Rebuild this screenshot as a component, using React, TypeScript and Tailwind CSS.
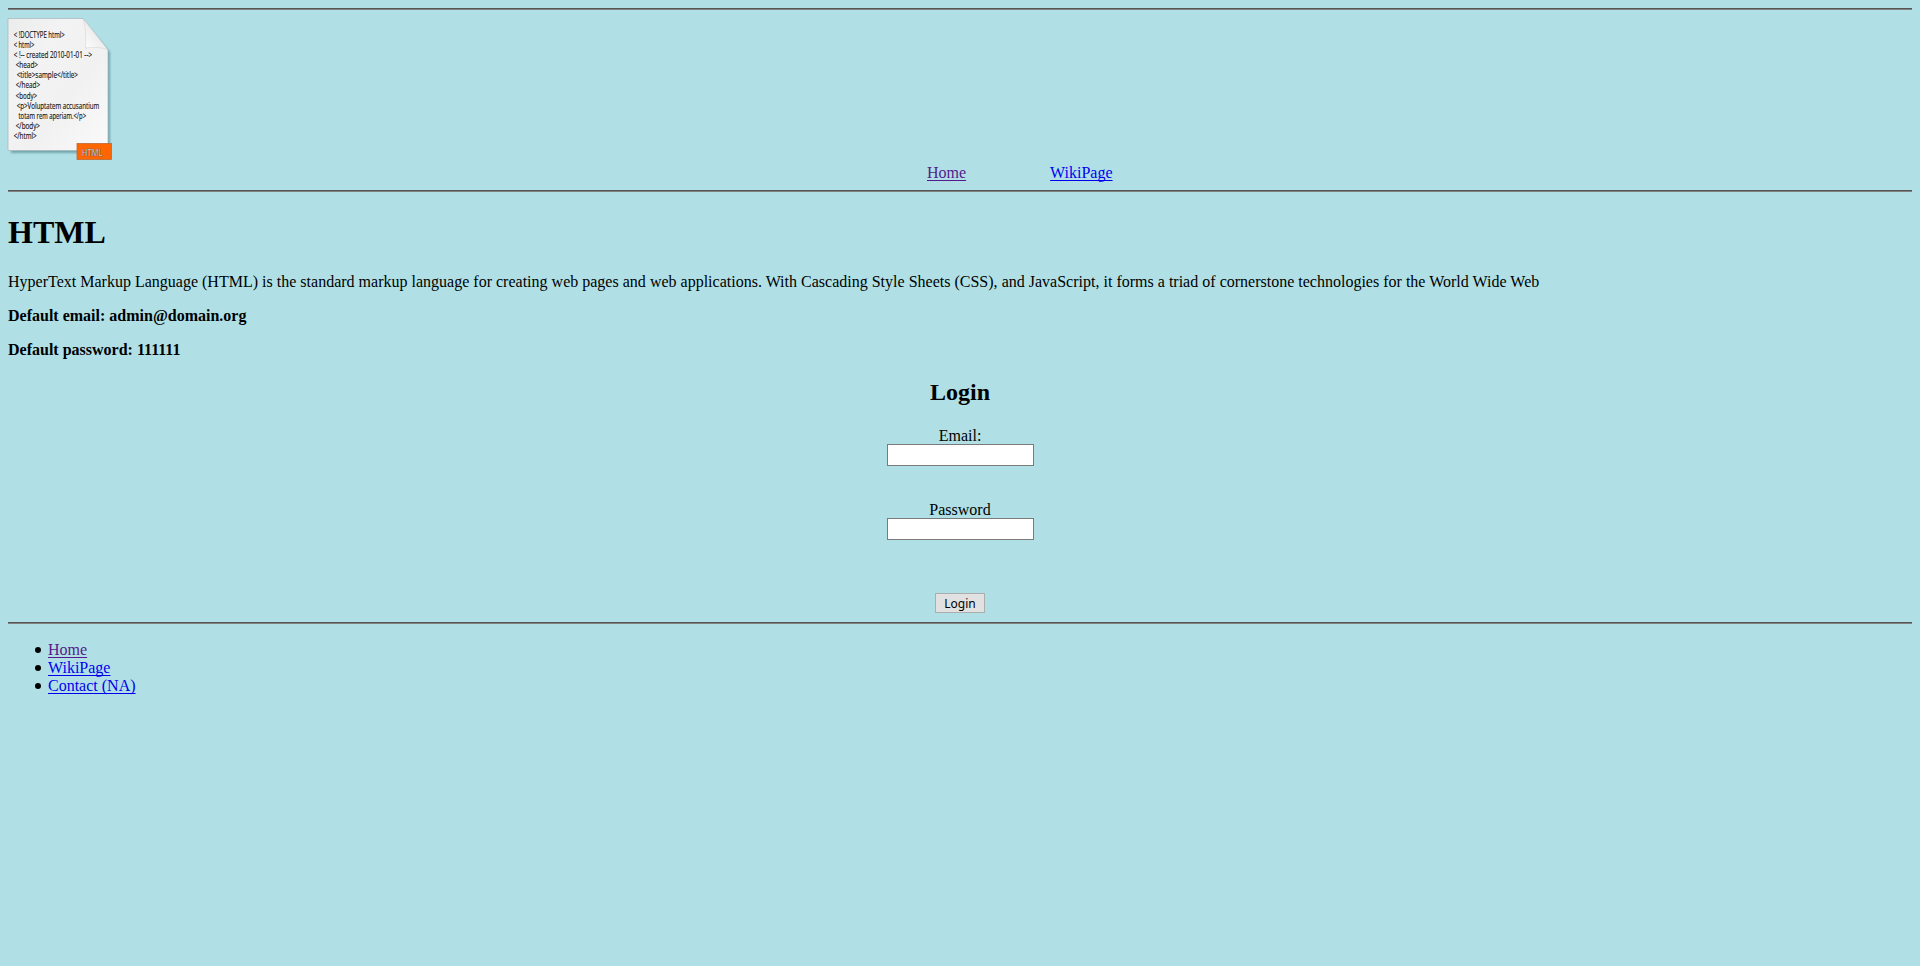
const codeLines = [
  { text: '< !DOCTYPE html>', x: 5.7, width: 51 },
  { text: '< html>', x: 5.7, width: 20.7 },
  { text: '< !-- created 2010-01-01 -->', x: 5.7, width: 78.3 },
  { text: '<head>', x: 7.7, width: 22.3 },
  { text: '<title>sample</title>', x: 8.7, width: 61.3 },
  { text: '</head>', x: 7.7, width: 24.3 },
  { text: '<body>', x: 7.7, width: 21.3 },
  { text: '<p>Voluptatem accusantium', x: 8.7, width: 82.6 },
  { text: 'totam rem aperiam.</p>', x: 10.5, width: 67.5 },
  { text: '</body>', x: 7.7, width: 24.3 },
  { text: '</html>', x: 5.7, width: 23 },
];

function HtmlDocumentLogo() {
  return (
    <svg width="104" height="142" viewBox="0 0 104 142" className="block overflow-visible">
      <defs>
        <linearGradient id="paper" x1="0" y1="0" x2="1" y2="1">
          <stop offset="0" stopColor="#ececec" />
          <stop offset="0.3" stopColor="#f3f3f3" />
          <stop offset="0.6" stopColor="#f1f1f1" />
          <stop offset="1" stopColor="#fafafa" />
        </linearGradient>
        <linearGradient id="fold" x1="0" y1="1" x2="1" y2="0">
          <stop offset="0" stopColor="#ffffff" />
          <stop offset="1" stopColor="#dcdcdc" />
        </linearGradient>
        <filter id="soft" x="-10%" y="-10%" width="120%" height="120%">
          <feGaussianBlur stdDeviation="1.2" />
        </filter>
      </defs>
      <path d="M3 4H76L102 34V135H3Z" fill="#4a8088" opacity="0.6" filter="url(#soft)" />
      <path d="M0 .5H75L100 32V132.500H0Z" fill="url(#paper)" stroke="#a5b5b8" strokeWidth=".7" />
      <path d="M75 .5C78 10 78 20 77.500 30C85 29 94 29 100 32Z" fill="url(#fold)" stroke="#c4c4c4" strokeWidth=".4" />
      {codeLines.map((line, i) => (
        <text
          key={i}
          x={line.x}
          y={19.8 + i * 10.13}
          textLength={line.width}
          lengthAdjust="spacingAndGlyphs"
          fontSize="9"
          fill="#111"
          stroke="#111"
          strokeWidth=".15"
          fontFamily="Open Sans, sans-serif"
        >
          {line.text}
        </text>
      ))}
      <rect x="69" y="125.500" width="34.500" height="16" fill="#ff6600" stroke="#b86a38" strokeWidth=".8" />
      <text x="74" y="137.500" textLength="20.500" lengthAdjust="spacingAndGlyphs" fontSize="9.500" fill="#d9c9bb" stroke="#5c5450" strokeWidth=".7" paintOrder="stroke" fontFamily="Open Sans, sans-serif">
        HTML
      </text>
    </svg>
  );
}

function Rule() {
  return <hr className="h-[2px] border-0 border-t border-t-[#555] bg-[#808080]" />;
}

const linkBase = 'underline decoration-1 underline-offset-2 [text-decoration-skip-ink:none]';
const listItem = "flex items-center before:mr-[7px] before:size-1.5 before:rounded-full before:bg-black before:content-['']";

export default function App() {
  return (
    <div className="min-h-screen bg-[#b0e0e6] p-2 font-['Liberation_Serif',serif] text-[16px] leading-[18px] text-black">
      <Rule />
      <header className="pt-2 pb-2">
        <HtmlDocumentLogo />
        <nav className="mt-1 flex gap-[84px] pl-[919px]">
          <a href="#" className={`${linkBase} text-[#551a8b]`}>Home</a>
          <a href="#" className={`${linkBase} text-[#0000ee]`}>WikiPage</a>
        </nav>
      </header>
      <Rule />
      <main className="flex flex-col pb-[9px]">
        <h1 className="mt-[22px] text-[32px] leading-[37px] font-bold">HTML</h1>
        <p className="mt-[22px] whitespace-nowrap [word-spacing:0.04px]">
          HyperText Markup Language (HTML) is the standard markup language for creating web pages and web applications. With Cascading Style Sheets (CSS), and JavaScript, it forms a triad of cornerstone technologies for the World Wide Web
        </p>
        <p className="mt-4 font-bold">Default email: admin@domain.org</p>
        <p className="mt-4 font-bold">Default password: 111111</p>
        <form className="flex flex-col items-center" onSubmit={(e) => e.preventDefault()}>
          <h2 className="mt-5 text-[24px] leading-[27px] font-bold">Login</h2>
          <label htmlFor="email" className="mt-[21px] h-[17px]">Email:</label>
          <input id="email" type="email" className="ml-px h-[22px] w-[147px] border border-[#7a7a7a] bg-white" />
          <label htmlFor="password" className="mt-[35px] h-[17px]">Password</label>
          <input id="password" type="password" className="ml-px h-[22px] w-[147px] border border-[#7a7a7a] bg-white" />
          <button className="mt-[53px] h-5 w-[50px] border border-[#adadad] bg-[#e1e1e1] pt-px font-['Noto_Sans',sans-serif] text-[12px] leading-[18px]">
            Login
          </button>
        </form>
      </main>
      <Rule />
      <footer className="pt-[17px]">
        <ul className="pl-[27px]">
          <li className={listItem}><a href="#" className={`${linkBase} text-[#551a8b]`}>Home</a></li>
          <li className={listItem}><a href="#" className={`${linkBase} text-[#0000ee]`}>WikiPage</a></li>
          <li className={listItem}><a href="#" className={`${linkBase} text-[#0000ee]`}>Contact (NA)</a></li>
        </ul>
      </footer>
    </div>
  );
}
